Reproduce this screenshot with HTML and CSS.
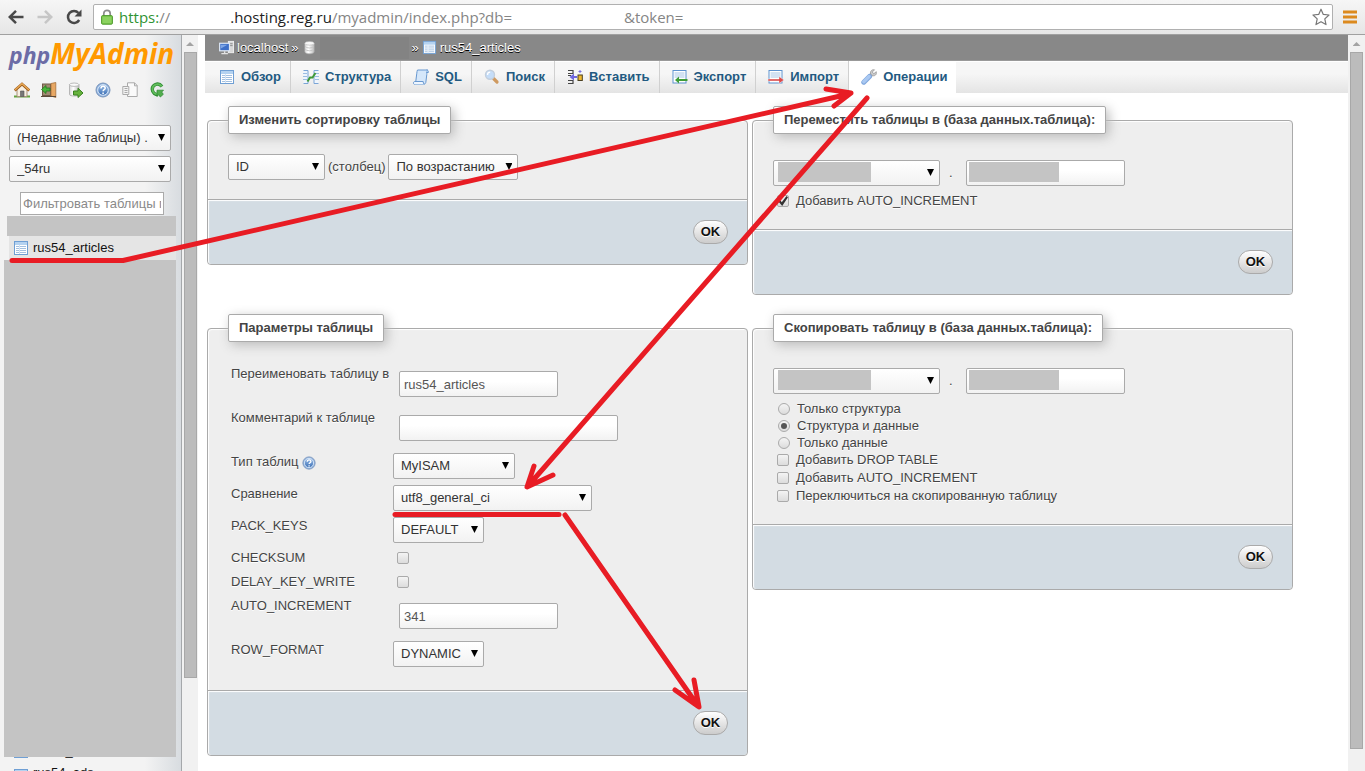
FILE: index.html
```html
<!DOCTYPE html>
<html lang="ru">
<head>
<meta charset="utf-8">
<title>phpMyAdmin</title>
<link rel="stylesheet" href="styles.css">
</head>
<body>
<svg class="defs" aria-hidden="true">
  <defs>
    <linearGradient id="g-blue" x1="0" y1="0" x2="0" y2="1"><stop offset="0" stop-color="#9dbfe8"/><stop offset="1" stop-color="#3b6fb5"/></linearGradient>
    <linearGradient id="g-db" x1="0" y1="0" x2="1" y2="0"><stop offset="0" stop-color="#d8d8d8"/><stop offset=".4" stop-color="#fff"/><stop offset="1" stop-color="#bbb"/></linearGradient>
    <symbol id="i-table" viewBox="0 0 16 16">
      <rect x="1.500" y="1.500" width="13" height="13" fill="#fff" stroke="#6f9fd4"/>
      <path d="M2 3.500h12" stroke="#b4d2f0" stroke-width="3"/>
      <path d="M3 6.500h3M7 6.500h6M3 8.500h3M7 8.500h6M3 10.500h3M7 10.500h6M3 12.500h3M7 12.500h6" stroke="#a3c0e0"/>
      <path d="M6.500 5v9" stroke="#d3e3f4"/>
    </symbol>
    <symbol id="i-help" viewBox="0 0 16 16">
      <circle cx="8" cy="8" r="7" fill="#8fb2de" stroke="#7894bb"/>
      <circle cx="8" cy="8" r="5.300" fill="url(#g-blue)" stroke="#dce9f8"/>
      <path d="M6 6.500c0-3 4.200-2.700 4.200-.3 0 1.500-2.100 1.500-2.100 3M8.100 10.500v1.500" fill="none" stroke="#fff" stroke-width="1.500"/>
    </symbol>
    <symbol id="i-db" viewBox="0 0 16 16">
      <path d="M3 3.500v9c0 3 10 3 10 0v-9z" fill="url(#g-db)" stroke="#a8a8a8" stroke-width=".7"/>
      <ellipse cx="8" cy="3.500" rx="5" ry="2" fill="#f8f8f8" stroke="#b5b5b5" stroke-width=".7"/>
      <path d="M3.500 7c1 2 8 2 9 0M3.500 10c1 2 8 2 9 0" fill="none" stroke="#c4c4c4"/>
    </symbol>
    <symbol id="i-home" viewBox="0 0 16 16">
      <path d="M0 14.500h16" stroke="#62a33c" stroke-width="2"/>
      <path d="M3 7v7.500h10V7L8 3z" fill="#f7efe2" stroke="#a8927a"/>
      <path d="M6.500 14.500V9h3.500v5.500z" fill="#777" stroke="#555" stroke-width=".6"/>
      <path d="M.7 8.500 8 2l7.300 6.500" fill="none" stroke="#9b5a1b" stroke-width="2.800"/>
      <path d="M.9 8 8 1.800 15.100 8" fill="none" stroke="#e9a955" stroke-width="1.400"/>
    </symbol>
    <symbol id="i-exit" viewBox="0 0 16 16">
      <rect x="1.500" y="2" width="8" height="11.500" fill="#a08a72" stroke="#6f5a46"/>
      <path d="M10 1.500 14.800.5v15L10 14z" fill="#e8a864" stroke="#a5703a" stroke-width=".8"/>
      <path d="M0 14.500h15" stroke="#5b4a3a"/>
      <path d="M.5 7.500 5 3.500V6h4v3H5v2.500z" fill="#49b53c" stroke="#1f7a1c" stroke-width=".8"/>
    </symbol>
    <symbol id="i-go" viewBox="0 0 16 16">
      <path d="M1.500 2.500v10c0 2 9.500 2 9.500 0v-10z" fill="url(#g-db)" stroke="#aaa" stroke-width=".8"/>
      <ellipse cx="6.200" cy="2.700" rx="4.700" ry="1.700" fill="#fafafa" stroke="#aaa" stroke-width=".8"/>
      <path d="M5.500 9H10V6.200l5 4.800-5 4.500V13H5.500z" fill="#66b33d" stroke="#38801f"/>
    </symbol>
    <symbol id="i-docs" viewBox="0 0 16 16">
      <path d="M5.500.800h7l2.700 2.700v11H5.500z" fill="#fafafa" stroke="#aaa"/>
      <path d="M12.500.800v3h2.700" fill="none" stroke="#aaa"/>
      <path d="M.8 4.500h6v8h-6z" fill="#f2f2f2" stroke="#aaa"/>
      <path d="M2.500 6.500h3M2.500 8.500h3M2.500 10.500h3" stroke="#aaa"/>
    </symbol>
    <symbol id="i-reload" viewBox="0 0 16 16">
      <path d="M13 4.500C9-.3 3 3 3.300 7.500c.2 3.500 3 5 5.700 5" fill="none" stroke="#2f8c34" stroke-width="3.400"/>
      <path d="M12.700 4.300C9 0 3.200 3.200 3.500 7.500c.2 3.200 2.800 4.700 5 4.700" fill="none" stroke="#62bd5c" stroke-width="1.800"/>
      <path d="M8 8.200h6.500L12.700 10l1.600 2.300-3 2.700-1.600-2.300L8 14.500z" fill="#51ad4d" stroke="#2f8c34" stroke-width=".8"/>
    </symbol>
    <symbol id="i-server" viewBox="0 0 16 16">
      <rect x="10" y="1.500" width="5.500" height="12" fill="#d8d8d8" stroke="#eee"/>
      <path d="M11 4h3.500M11 6h3.500" stroke="#888"/>
      <rect x=".7" y="3.500" width="10.500" height="8" fill="#3d6fc8" stroke="#dde7f5" stroke-width="1.300"/>
      <path d="M2 5h7L2 9z" fill="#7ea6e6"/>
      <path d="M6 12v2M2.500 14.500h7" stroke="#e2e2e2" stroke-width="1.500"/>
    </symbol>
    <symbol id="i-struct" viewBox="0 0 16 16">
      <path d="M.5 1.500h4.500v13H.5M15.500 1.500H11v13h4.500" fill="#eef5fd" stroke="#7ba5d6"/>
      <path d="M0 4.500h4M0 7.500h4M0 10.500h4M12 4.500h4M12 7.500h4M12 10.500h4" stroke="#9bbde2"/>
      <path d="M4.500 12.500 7 8.500h2.500l3-4.500" fill="none" stroke="#3f9a38" stroke-width="2"/>
    </symbol>
    <symbol id="i-sql" viewBox="0 0 16 16">
      <path d="M4.500 1h10.300c-1.500 1-.8 3-1 4.500l-1 8c-.2 1-1 1.700-2 1.700H1c1.500-.7 1.700-2 1.800-3l1-8C4 3 4 1.800 4.500 1z" fill="#d5e7fa" stroke="#6898d0"/>
      <path d="M1 15.200c-1-.7-.5-2.500.5-2.700h8.700c0 1 .2 2.200 1 2.700" fill="#eef6ff" stroke="#6898d0"/>
      <path d="M13.500 1c1.500 0 2 1 1.800 2.500h-2" fill="#b8d4f2" stroke="#6898d0"/>
    </symbol>
    <symbol id="i-search" viewBox="0 0 16 16">
      <path d="m9.500 9.500 3.500 3.500" stroke="#cf9a60" stroke-width="3.200" stroke-linecap="round"/>
      <circle cx="6" cy="5.800" r="4.500" fill="#c5ddf8" stroke="#c3cfdd" stroke-width="1.400"/>
      <path d="M3.500 6c0-2 1.200-2.800 2.700-2.800" stroke="#fff" fill="none" stroke-width="1.300"/>
    </symbol>
    <symbol id="i-insert" viewBox="0 0 16 16">
      <path d="M1 1.500h5v3H1M1 11.500h5v3H1M1 6.500h3" fill="none" stroke="#444" stroke-width="1.200"/>
      <path d="m2.500 8 4.500-3.500V7h3v2H7v2.500z" fill="#6f67df"/>
      <rect x="11" y="6" width="4.300" height="5.500" fill="#efb82e" stroke="#4b4020"/>
      <path d="M13 1v3M11.500 2.500h3" stroke="#7770dd"/>
    </symbol>
    <symbol id="i-export" viewBox="0 0 16 16">
      <rect x="1" y="1.500" width="13" height="12.500" fill="#fff" stroke="#5f93cf"/>
      <path d="M2.500 4h10M2.500 6h10M2.500 8h10" stroke="#a6c4e6"/>
      <path d="m3 11 4-3.500V10h8.500v2H7v2.500z" fill="#3f9d38"/>
    </symbol>
    <symbol id="i-import" viewBox="0 0 16 16">
      <rect x="1" y="1.500" width="13" height="12.500" fill="#fff" stroke="#5f93cf"/>
      <path d="M2.500 4h10M2.500 6h10M2.500 8h10" stroke="#a6c4e6"/>
      <path d="M0 10h11V7.500l5 3.500-5 3.500V12H0z" fill="#dc4b4b" stroke="#fff" stroke-width=".4"/>
    </symbol>
    <symbol id="i-wrench" viewBox="0 0 16 16">
      <path d="m9 7 3-3" stroke="#a9a9a9" stroke-width="3.400"/>
      <path d="M13.500.800 11.300 3l1.500 1.700L15.300 2.700c.7 3-1.500 4.600-4 4L9.500 5C9 2 11 .2 13.500.800z" fill="#cacaca" stroke="#999" stroke-width=".8"/>
      <path d="m2.800 13.200 5.700-5.700" stroke="#7fa6dc" stroke-width="5" stroke-linecap="round"/>
      <path d="m2.800 12.800 5.300-5.300" stroke="#a9c8f2" stroke-width="3.400" stroke-linecap="round"/>
    </symbol>
  </defs>
</svg>

<header class="browser">
  <button class="nav-btn" aria-label="Назад"><svg viewBox="0 0 16 16"><path d="M15.500 8H2M8 1.800 1.700 8 8 14.200" fill="none" stroke="#484848" stroke-width="2.500"/></svg></button>
  <button class="nav-btn" aria-label="Вперёд"><svg viewBox="0 0 16 16"><path d="M.5 8H14M8 1.800 14.300 8 8 14.200" fill="none" stroke="#c6c6c6" stroke-width="2.500"/></svg></button>
  <button class="nav-btn" aria-label="Обновить"><svg viewBox="0 0 16 16"><path d="M13.200 11A6 6 0 1 1 12.500 4" fill="none" stroke="#484848" stroke-width="2.500"/><path d="M15.500.500v7h-7z" fill="#484848"/></svg></button>
  <div class="address" role="textbox" aria-label="Адрес">
    <svg class="lock" viewBox="0 0 12 16"><path d="M2.800 7V4.500c0-4.300 6.400-4.300 6.400 0V7" fill="none" stroke="#8c8c8c" stroke-width="1.700"/><rect x=".6" y="6.600" width="10.800" height="8.600" rx="1" fill="#7cc94e" stroke="#4f9a2d"/><path d="M1.500 9h9M1.500 11h9M1.500 13h9" stroke="#9bdb72"/></svg>
    <span class="url"><span class="scheme">https:</span><span>//</span><span class="gap gap-s"></span><span class="host">.hosting.reg.ru</span><span>/myadmin/index.php?db=</span><span class="gap gap-l"></span><span>&amp;token=</span></span>
    <svg class="star" viewBox="0 0 18 18"><path d="m9 1.200 2.300 5.200 5.700.6-4.200 3.900 1.200 5.700L9 13.700l-5 2.900 1.200-5.700L1 7l5.700-.6z" fill="#fff" stroke="#777" stroke-width="1.200" stroke-linejoin="round"/></svg>
  </div>
  <button class="menu-btn" aria-label="Меню"><svg viewBox="0 0 14 14"><path d="M0 2h14M0 7h14M0 12h14" stroke="#dc8a1e" stroke-width="3"/></svg></button>
</header>

<div class="app">
  <aside class="sidebar">
    <div class="logo"><span class="php">php</span><span class="mya">MyAdmin</span></div>
    <nav class="tools">
      <a href="#" aria-label="К началу"><svg><use href="#i-home"/></svg></a>
      <a href="#" aria-label="Выход"><svg><use href="#i-exit"/></svg></a>
      <a href="#" aria-label="Окно запроса"><svg><use href="#i-go"/></svg></a>
      <a href="#" aria-label="Документация"><svg><use href="#i-help"/></svg></a>
      <a href="#" aria-label="Документация MySQL"><svg><use href="#i-docs"/></svg></a>
      <a href="#" aria-label="Перезагрузить"><svg><use href="#i-reload"/></svg></a>
    </nav>
    <div class="side-selects">
      <span class="select"><select aria-label="Недавние таблицы"><option>(Недавние таблицы) .</option></select></span>
      <span class="select"><select aria-label="База данных"><option>_54ru</option></select></span>
    </div>
    <input class="filter" type="text" placeholder="Фильтровать таблицы по имени" aria-label="Фильтровать таблицы">
    <div class="hidden-top"></div>
    <a class="table-link current" href="#"><svg><use href="#i-table"/></svg>rus54_articles</a>
    <div class="hidden-list"></div>
    <a class="table-link tucked" href="#"><svg><use href="#i-table"/></svg>rus54_arts</a>
    <a class="table-link last" href="#"><svg><use href="#i-table"/></svg>rus54_ads</a>
  </aside>
  <div class="scroll side-scroll"><i class="up"></i><i class="thumb"></i><i class="rest"></i></div>

  <main class="main">
    <div class="crumbs">
      <svg><use href="#i-server"/></svg><a href="#">localhost</a><span>»</span><svg><use href="#i-db"/></svg><span class="crumb-hidden"></span><span>»</span><svg><use href="#i-table"/></svg><a href="#">rus54_articles</a>
    </div>
    <nav class="tabs">
      <a href="#"><svg><use href="#i-table"/></svg>Обзор</a>
      <a href="#"><svg><use href="#i-struct"/></svg>Структура</a>
      <a href="#"><svg><use href="#i-sql"/></svg>SQL</a>
      <a href="#"><svg><use href="#i-search"/></svg>Поиск</a>
      <a href="#"><svg><use href="#i-insert"/></svg>Вставить</a>
      <a href="#"><svg><use href="#i-export"/></svg>Экспорт</a>
      <a href="#"><svg><use href="#i-import"/></svg>Импорт</a>
      <a href="#" class="active"><svg><use href="#i-wrench"/></svg>Операции</a>
    </nav>

    <div class="panels">
      <fieldset class="panel">
        <legend>Изменить сортировку таблицы</legend>
        <div class="order-row">
          <span class="select w-id"><select id="order-col"><option>ID</option></select></span>
          <label for="order-col">(столбец)</label>
          <span class="select w-order"><select aria-label="Порядок"><option>По возрастанию</option></select></span>
        </div>
        <div class="foot"><button class="ok">OK</button></div>
      </fieldset>

      <fieldset class="panel">
        <legend>Переместить таблицы в (база данных.таблица):</legend>
        <div class="target">
          <div class="target-row">
            <span class="select w-db"><select aria-label="База данных"><option></option></select><i class="mask"></i></span>
            <span class="dot">.</span>
            <span class="field"><input class="text" type="text" aria-label="Таблица"><i class="mask"></i></span>
          </div>
          <label class="check"><input type="checkbox" checked>Добавить AUTO_INCREMENT</label>
        </div>
        <div class="foot"><button class="ok">OK</button></div>
      </fieldset>

      <fieldset class="panel">
        <legend>Параметры таблицы</legend>
        <div class="options">
          <label for="o-name">Переименовать таблицу в</label>
          <div><input class="text inset" id="o-name" type="text" value="rus54_articles"></div>
          <label for="o-comment">Комментарий к таблице</label>
          <div><input class="text inset wide" id="o-comment" type="text"></div>
          <label for="o-engine">Тип таблиц <svg><use href="#i-help"/></svg></label>
          <div><span class="select w-engine"><select id="o-engine"><option>MyISAM</option></select></span></div>
          <label for="o-coll">Сравнение</label>
          <div><span class="select w-coll"><select id="o-coll"><option>utf8_general_ci</option></select></span></div>
          <label for="o-pack">PACK_KEYS</label>
          <div><span class="select w-short"><select id="o-pack"><option>DEFAULT</option></select></span></div>
          <label for="o-sum">CHECKSUM</label>
          <div><input class="box" id="o-sum" type="checkbox"></div>
          <label for="o-delay">DELAY_KEY_WRITE</label>
          <div><input class="box" id="o-delay" type="checkbox"></div>
          <label for="o-auto">AUTO_INCREMENT</label>
          <div><input class="text inset" id="o-auto" type="text" value="341"></div>
          <label for="o-row">ROW_FORMAT</label>
          <div><span class="select w-short"><select id="o-row"><option>DYNAMIC</option></select></span></div>
        </div>
        <div class="foot"><button class="ok">OK</button></div>
      </fieldset>

      <fieldset class="panel">
        <legend>Скопировать таблицу в (база данных.таблица):</legend>
        <div class="target">
          <div class="target-row">
            <span class="select w-db"><select aria-label="База данных"><option></option></select><i class="mask"></i></span>
            <span class="dot">.</span>
            <span class="field"><input class="text" type="text" aria-label="Таблица"><i class="mask"></i></span>
          </div>
          <label class="check radio"><input type="radio" name="what">Только структура</label>
          <label class="check radio"><input type="radio" name="what" checked>Структура и данные</label>
          <label class="check radio"><input type="radio" name="what">Только данные</label>
          <label class="check"><input type="checkbox">Добавить DROP TABLE</label>
          <label class="check"><input type="checkbox">Добавить AUTO_INCREMENT</label>
          <label class="check"><input type="checkbox">Переключиться на скопированную таблицу</label>
        </div>
        <div class="foot"><button class="ok">OK</button></div>
      </fieldset>
    </div>
  </main>
  <div class="scroll main-scroll"><i class="up"></i><i class="thumb"></i><i class="rest"></i></div>
</div>

<svg class="arrows" width="1365" height="771" viewBox="0 0 1365 771" aria-hidden="true">
  <g fill="none" stroke="#e81c24" stroke-width="5" stroke-linecap="round" stroke-linejoin="round">
    <path d="M12 260.500H123L849 94M826 89l25 4-17 13"/>
    <path d="M867 98 528 486M534 466l-7 21 26-12"/>
    <path d="M395 514.500H559"/>
    <path d="M565 515 698 706M694 680l5 27-24-17"/>
  </g>
</svg>
</body>
</html>
```
FILE: styles.css
```css
* { box-sizing: border-box; }
body {
  margin: 0;
  height: 100vh;
  display: flex;
  flex-direction: column;
  overflow: hidden;
  position: relative;
  background: #fff;
  color: #444;
  font: 13px/18px "Liberation Sans", Arial, sans-serif;
}
a { color: inherit; text-decoration: none; }
button, input, select { font: inherit; color: inherit; margin: 0; }
.defs { position: absolute; width: 0; height: 0; }
.arrows { position: absolute; left: 0; top: 0; z-index: 2; pointer-events: none; }

/* browser toolbar */
.browser {
  flex: none;
  display: flex;
  align-items: center;
  height: 35px;
  padding: 0 8px;
  gap: 12px;
  background: linear-gradient(#f6f6f6, #e6e6e6);
  border-bottom: 1px solid #a0a0a0;
}
.nav-btn, .menu-btn { flex: none; width: 16px; height: 16px; padding: 0; border: 0; background: none; }
.nav-btn svg { display: block; width: 16px; height: 16px; }
.nav-btn + .nav-btn { margin-left: 1px; }
.menu-btn { width: 14px; height: 14px; }
.menu-btn svg { display: block; width: 14px; height: 14px; }
.address {
  flex: 1;
  display: flex;
  align-items: center;
  height: 26px;
  padding: 0 2px 0 7px;
  gap: 6px;
  background: #fff;
  border: 1px solid #b0b0b0;
  border-radius: 2px;
}
.nav-btn + .address { margin-left: -1px; }
.address + .menu-btn { margin-left: -2px; }
.lock { flex: none; width: 12px; height: 16px; }
.star { flex: none; width: 18px; height: 18px; }
.url { flex: 1; display: flex; color: #858585; font: 15px/22px "Open Sans", "Noto Sans", sans-serif; }
.scheme { color: #2f9332; }
.host { color: #222; }
.gap-s { width: 60px; }
.gap-l { width: 112px; }

.app { flex: 1; min-height: 0; display: flex; }

/* navigation column */
.sidebar {
  flex: none;
  width: 182px;
  overflow: hidden;
  background: linear-gradient(90deg, #f3f3f3 80%, #d8dce0);
  border-right: 1px solid #a5a8ab;
  color: #111;
}
.logo { height: 40px; padding: 2px 0 0 9px; font: italic 700 28px/32px "Open Sans", sans-serif; white-space: nowrap; }
.php { color: #6c6ca6; font-size: 23px; }
.mya { color: #f90; }
.tools { display: flex; gap: 11px; height: 50px; padding: 7px 0 0 14px; }
.tools svg { display: block; width: 16px; height: 16px; }
.side-selects { display: flex; flex-direction: column; gap: 5px; padding: 0 10px 0 9px; }
.filter {
  display: block;
  width: 144px;
  height: 23px;
  margin: 10px 0 1px 20px;
  padding: 0 2px;
  border: 1px solid #aaa;
  background: #fff;
}
.filter::placeholder { color: #8a8a8a; }
.hidden-top { height: 20px; margin: 0 5px 0 7px; background: #c4c4c4; }
.hidden-list { position: relative; z-index: 1; height: 497px; margin: 0 5px 0 4px; background: #c4c4c4; }
.table-link { display: flex; align-items: center; gap: 4px; height: 22px; padding-left: 13px; }
.table-link svg { width: 16px; height: 16px; }
.table-link.current { height: 24px; margin: 0 5px 0 9px; padding-left: 4px; background: #e5e5e5; }
.table-link.tucked { margin-top: -17px; }
.table-link.last svg { align-self: flex-end; }

/* scrollbars */
.scroll { flex: none; width: 17px; display: flex; flex-direction: column; align-items: center; background: #f1f1f1; }
.side-scroll { width: 16px; }
.up { flex: none; width: 8px; height: 4px; margin: 7px 0 6px; background: #a3a3a3; clip-path: polygon(50% 0, 100% 100%, 0 100%); }
.thumb { width: 13px; background: #bcbcbc; border: 1px solid #a8a8a8; }
.side-scroll .thumb { flex: 626; }
.side-scroll .rest { flex: 93; }
.main-scroll .thumb { flex: 697; }
.main-scroll .rest { flex: 22; }

/* main column */
.main { flex: 1; min-width: 0; margin-left: 7px; overflow: hidden; }
.crumbs {
  display: flex;
  align-items: center;
  gap: 3px;
  height: 25px;
  padding-left: 14px;
  background: #888;
  color: #fff;
  text-shadow: 0 1px 0 #000;
}
.crumbs svg { width: 15px; height: 15px; }
.crumb-hidden { width: 89px; height: 22px; background: #838383; }
.tabs {
  display: flex;
  height: 33px;
  border-top: 1px solid #999;
  box-shadow: inset 0 1px #fff;
  background: linear-gradient(#f6f6f6 40%, #e4e4e4);
  color: #235a81;
  font-weight: bold;
}
.tabs a { display: flex; align-items: center; gap: 6px; padding: 0 9px 0 12px; border-right: 1px solid #d0d0d0; white-space: nowrap; }
.tabs a:first-child { padding-left: 14px; }
.tabs svg { width: 16px; height: 16px; }
.tabs .active { background: #fff; border-right: 0; }

.panels { display: grid; grid-template-columns: 1fr 1fr; align-items: start; column-gap: 4px; row-gap: 19px; padding: 13px 55px 0 2px; }
.panel {
  min-width: 0;
  margin: 0;
  padding: 0;
  border: 1px solid #aaa;
  border-radius: 4px;
  background: #eee;
  box-shadow: inset 1px 1px 1px #fff;
  text-shadow: 0 1px 0 #fff;
}
legend {
  height: 28px;
  margin-left: 20px;
  padding: 0 10px;
  border: 1px solid #aaa;
  border-radius: 2px;
  background: #fff;
  box-shadow: 3px 3px 12px #bbb;
  font-weight: bold;
  line-height: 26px;
}
.foot {
  display: flex;
  align-items: center;
  justify-content: flex-end;
  height: 65px;
  padding-right: 19px;
  border-top: 1px solid #aaa;
  border-radius: 0 0 4px 4px;
  background: #d3dce3;
  box-shadow: inset 1px 1px 1px #fff;
}
.ok {
  width: 35px;
  height: 24px;
  padding: 0;
  border: 1px solid #aaa;
  border-radius: 12px;
  background: linear-gradient(#fff, #ccc);
  color: #111;
  font-weight: bold;
  text-shadow: 0 1px 0 #fff;
}

/* controls */
.select { position: relative; display: block; }
.select::after {
  content: "";
  position: absolute;
  right: 6px;
  top: 9px;
  width: 7px;
  height: 7px;
  background: #000;
  clip-path: polygon(0 0, 100% 0, 50% 100%);
  pointer-events: none;
}
select {
  appearance: none;
  display: block;
  width: 100%;
  height: 26px;
  padding: 0 7px;
  border: 1px solid #aaa;
  border-radius: 2px;
  background: linear-gradient(#fff, #f2f2f2);
  color: #333;
}
.text {
  display: block;
  width: 159px;
  height: 26px;
  padding: 0 4px;
  border: 1px solid #aaa;
  border-radius: 2px;
  background: linear-gradient(#fff 40%, #f2f2f2);
  color: #555;
}
.field { position: relative; }
.mask { position: absolute; left: 3px; top: 2px; width: 90px; height: 20px; background: #c4c4c4; }
.select .mask { left: 5px; width: 93px; }
.w-id { width: 97px; }
.w-order { width: 130px; }
.w-db { width: 167px; }
.w-engine { width: 122px; }
.w-coll { width: 199px; }
.w-short { width: 91px; }

input[type="checkbox"], input[type="radio"] {
  appearance: none;
  flex: none;
  display: grid;
  place-items: center;
  width: 12px;
  height: 12px;
  border: 1px solid #aaa;
  border-radius: 2px;
  background: linear-gradient(#f4f4f4, #dcdcdc);
}
input[type="radio"] { border-radius: 50%; }
input[type="radio"]:checked::before { content: ""; width: 6px; height: 6px; border-radius: 50%; background: #555; }
input[type="checkbox"]:checked::before {
  content: "";
  width: 10px;
  height: 10px;
  background: #333;
  clip-path: polygon(0 50%, 18% 38%, 38% 62%, 85% 0, 100% 12%, 42% 100%);
}

.order-row { display: flex; align-items: center; gap: 3px; padding: 20px 20px 19px; }
.target { padding: 26px 20px 19px; }
.target-row { display: flex; margin-bottom: 6px; }
.dot { width: 26px; padding-left: 9px; line-height: 26px; }
.check { display: flex; align-items: center; gap: 7px; padding-left: 4px; height: 18px; }
.check.radio { padding-left: 5px; height: 17px; }

.options { display: grid; grid-template-columns: 162px 1fr; padding: 20px 20px 20px 23px; }
.options > * { padding: 3px 0; }
.options svg { width: 14px; height: 14px; vertical-align: -4px; }
.inset { margin: 6px; }
.wide { width: 219px; }
.box { margin: 3px 4px; }
```
